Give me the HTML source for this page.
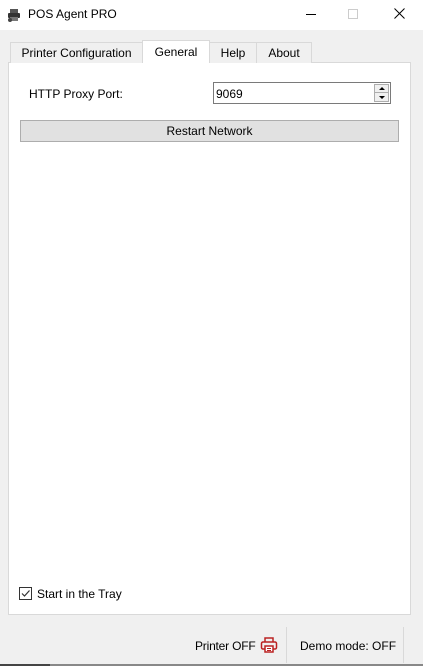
<!DOCTYPE html>
<html><head><style>
*{margin:0;padding:0;box-sizing:border-box}
body{width:423px;height:666px;background:#f0f0f0;font-family:"Liberation Sans",sans-serif;font-size:12px;color:#000;position:relative;overflow:hidden}
.a{position:absolute}
.title{left:0;top:0;width:423px;height:30px;background:#fff}
.tab{position:absolute;top:42px;height:21px;border:1px solid #d9d9d9;border-bottom:none;background:#f0f0f0;text-align:center;line-height:20px;font-size:12px}
</style></head><body>
<div class="a title"></div>
<svg class="a" style="left:7px;top:8px" width="14" height="14" viewBox="0 0 14 14"><rect x="3" y="1" width="8" height="4" fill="#555"/><rect x="1" y="5" width="12" height="5" rx="1" fill="#333"/><rect x="3" y="9" width="8" height="4" fill="#777"/><circle cx="3" cy="12" r="2" fill="#444"/></svg>
<div class="a" style="left:28px;top:7px;font-size:12px">POS Agent PRO</div>
<div class="a" style="left:306px;top:14px;width:10px;height:1px;background:#000"></div>
<div class="a" style="left:348px;top:9px;width:10px;height:10px;border:1px solid #ccc"></div>
<svg class="a" style="left:394px;top:8px" width="11" height="11"><path d="M0.5 0.5L10.5 10.5M10.5 0.5L0.5 10.5" stroke="#000" stroke-width="1"/></svg>
<div class="a" style="left:8px;top:62px;width:403px;height:553px;background:#fff;border:1px solid #d9d9d9"></div>
<div class="tab" style="left:10px;width:133px">Printer Configuration</div>
<div class="tab" style="left:142px;top:40px;height:23px;width:68px;background:#fff;z-index:2;line-height:22px">General</div>
<div class="tab" style="left:209px;width:48px">Help</div>
<div class="tab" style="left:256px;width:56px">About</div>
<div class="a" style="left:29px;top:87px">HTTP Proxy Port:</div>
<div class="a" style="left:213px;top:82px;width:178px;height:22px;border:1px solid #7a7a7a;background:#fff;padding:4px 0 0 2px">9069</div>
<div class="a" style="left:374px;top:84px;width:15px;height:18px;border:1px solid #adadad;background:#f0f0f0"></div>
<div class="a" style="left:375px;top:92px;width:13px;height:1px;background:#adadad"></div>
<svg class="a" style="left:378px;top:86px" width="8" height="14"><path d="M1 4L4 1L7 4Z M1 10L4 13L7 10Z" fill="#000"/></svg>
<div class="a" style="left:20px;top:120px;width:379px;height:22px;background:#e1e1e1;border:1px solid #adadad;text-align:center;line-height:20px">Restart Network</div>
<div class="a" style="left:19px;top:587px;width:13px;height:13px;border:1px solid #333;background:#fff"></div>
<svg class="a" style="left:20px;top:588px" width="11" height="11"><path d="M2 5.5L4.5 8L9.5 2.5" stroke="#333" stroke-width="1.2" fill="none"/></svg>
<div class="a" style="left:37px;top:587px">Start in the Tray</div>
<div class="a" style="left:195px;top:639px;letter-spacing:-0.2px">Printer OFF</div>
<svg class="a" style="left:260px;top:636px" width="18" height="18" viewBox="0 0 18 18"><path d="M5 6V2h8v4" stroke="#b22" stroke-width="1.5" fill="none"/><rect x="1.5" y="6" width="15" height="7" rx="1.5" stroke="#b22" stroke-width="1.5" fill="none"/><rect x="5" y="10" width="8" height="6" stroke="#b22" stroke-width="1.5" fill="#fff"/><path d="M7 12.5h4M7 14.5h4" stroke="#b22"/></svg>
<div class="a" style="left:286px;top:627px;width:1px;height:36px;background:#d9d9d9"></div>
<div class="a" style="left:300px;top:639px">Demo mode: OFF</div>
<div class="a" style="left:403px;top:627px;width:1px;height:36px;background:#d9d9d9"></div>
<div class="a" style="left:0;top:664px;width:50px;height:2px;background:#444"></div>
<div class="a" style="left:50px;top:664px;width:373px;height:2px;background:#888"></div>
</body></html>
